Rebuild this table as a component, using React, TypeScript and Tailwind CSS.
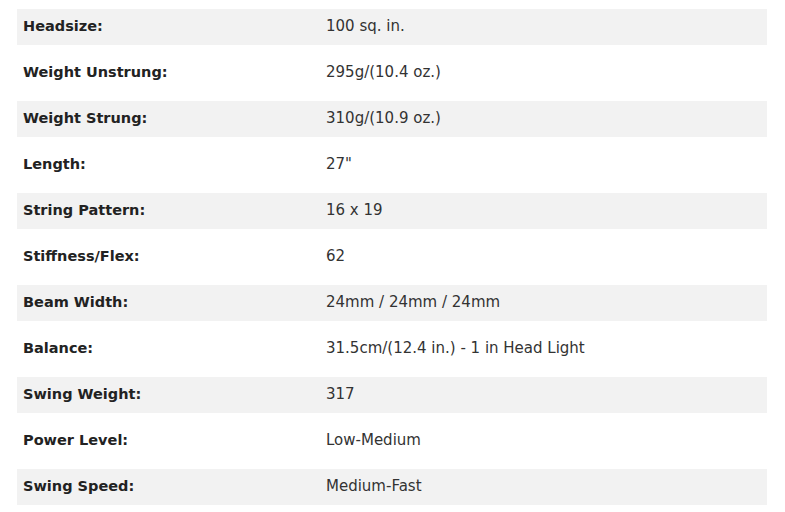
const rows: [string, string][] = [
  ["Headsize:", "100 sq. in."],
  ["Weight Unstrung:", "295g/(10.4 oz.)"],
  ["Weight Strung:", "310g/(10.9 oz.)"],
  ["Length:", "27\""],
  ["String Pattern:", "16 x 19"],
  ["Stiffness/Flex:", "62"],
  ["Beam Width:", "24mm / 24mm / 24mm"],
  ["Balance:", "31.5cm/(12.4 in.) - 1 in Head Light"],
  ["Swing Weight:", "317"],
  ["Power Level:", "Low-Medium"],
  ["Swing Speed:", "Medium-Fast"],
];

export default function App() {
  return (
    <div className="w-[785px] h-[512px] bg-white pt-[9px] pl-[17px] pr-[18px] font-['DejaVu_Sans',sans-serif] text-[15px]">
      <div className="flex flex-col gap-[10px]">
        {rows.map(([k, v], i) => (
          <div
            key={k}
            className={
              i % 2 === 0
                ? "flex h-[36px] items-center pb-[1px] bg-[#f2f2f2]"
                : "flex h-[36px] items-center pb-[1px] bg-white"
            }
          >
            <div className="w-[309px] pl-[6px] font-bold text-[14.5px] text-[#222]">{k}</div>
            <div className="text-[#333]">{v}</div>
          </div>
        ))}
      </div>
    </div>
  );
}
